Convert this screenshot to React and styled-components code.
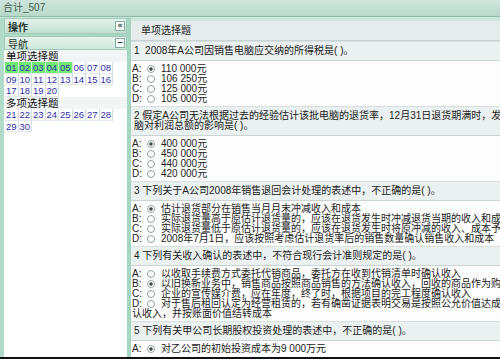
import React from "react";
import styled, { createGlobalStyle } from "styled-components";

const GlobalStyle = createGlobalStyle`
  html, body {
    margin: 0;
    padding: 0;
    background: #111;
  }
  body {
    font-family: "Liberation Sans", "Noto Sans CJK SC", sans-serif;
    overflow: hidden;
  }
`;

const single = [1, 2, 3, 4, 5, 6, 7, 8, 9, 10, 11, 12, 13, 14, 15, 16, 17, 18, 19, 20];
const multi = [21, 22, 23, 24, 25, 26, 27, 28, 29, 30];
const done = [1, 2, 3, 4, 5];

const questions = [
  {
    head: ["1\u00a0 2008年A公司因销售电脑应交纳的所得税是( )。"],
    picked: 0,
    options: [["110 000元"], ["106 250元"], ["125 000元"], ["105 000元"]],
  },
  {
    head: [
      "2 假定A公司无法根据过去的经验估计该批电脑的退货率，12月31日退货期满时，发生销售退回的电",
      "脑对利润总额的影响是( )。",
    ],
    picked: 0,
    options: [["400 000元"], ["450 000元"], ["440 000元"], ["420 000元"]],
  },
  {
    head: ["3 下列关于A公司2008年销售退回会计处理的表述中，不正确的是( )。"],
    picked: 0,
    options: [
      ["估计退货部分在销售当月月末冲减收入和成本"],
      ["实际退货量高于原估计退货量的，应该在退货发生时冲减退货当期的收入和成本"],
      ["实际退货量低于原估计退货量的，应该在退货发生时将原冲减的收入、成本予以转回"],
      ["2008年7月1日，应该按照考虑估计退货率后的销售数量确认销售收入和成本"],
    ],
  },
  {
    head: ["4 下列有关收入确认的表述中，不符合现行会计准则规定的是( )。"],
    picked: 1,
    options: [
      ["以收取手续费方式委托代销商品，委托方在收到代销清单时确认收入"],
      ["以旧换新业务中，销售商品按照商品销售的方法确认收入，回收的商品作为购进商品处理"],
      ["企业的宣传媒介费，应在年度，终了时，根据项目的完工程度确认收入"],
      [
        "对于售后租回认定为经营租赁的，若有确凿证据表明交易是按照公允价值达成的，应当确",
        "认收入，并按账面价值结转成本",
      ],
    ],
  },
  {
    head: ["5 下列有关甲公司长期股权投资处理的表述中，不正确的是( )。"],
    picked: 0,
    options: [["对乙公司的初始投资成本为9 000万元"]],
  },
];

const letters = ["A", "B", "C", "D"];

const pad = (n) => (n < 10 ? "0" + n : String(n));

export default function App() {
  return (
    <>
      <GlobalStyle />
      <Window>
        <TitleBar>合计_507</TitleBar>
        <Body>
          <Side>
            <SideHead>
              <span>操作</span>
              <HeadBtn>«</HeadBtn>
            </SideHead>
            <SideHead $sub>
              <span>导航</span>
              <HeadBtn>−</HeadBtn>
            </SideHead>
            <Nav>
              <GroupLabel>单项选择题</GroupLabel>
              <Grid>
                {single.map((n) => (
                  <Cell key={n} $on={done.includes(n)}>
                    {pad(n)}
                  </Cell>
                ))}
              </Grid>
              <GroupLabel>多项选择题</GroupLabel>
              <Grid>
                {multi.map((n) => (
                  <Cell key={n}>{n}</Cell>
                ))}
              </Grid>
            </Nav>
          </Side>
          <Main>
            <MainHead>单项选择题</MainHead>
            {questions.map((q, qi) => (
              <div key={qi}>
                <QHead>
                  {q.head.map((line, i) => (
                    <div key={i}>{line}</div>
                  ))}
                </QHead>
                <Options>
                  {q.options.map((opt, oi) => (
                    <React.Fragment key={oi}>
                      <Opt>
                        <Letter>{letters[oi]}:</Letter>
                        <Radio $on={q.picked === oi} />
                        <span>{opt[0]}</span>
                      </Opt>
                      {opt.slice(1).map((more, mi) => (
                        <Opt key={mi}>{more}</Opt>
                      ))}
                    </React.Fragment>
                  ))}
                </Options>
              </div>
            ))}
          </Main>
        </Body>
        <BottomEdge />
      </Window>
    </>
  );
}

const Window = styled.div`
  width: 500px;
  height: 359px;
  display: flex;
  flex-direction: column;
  overflow: hidden;
  background: #cde6db;
`;

const TitleBar = styled.div`
  height: 16px;
  flex: none;
  padding-left: 3px;
  line-height: 16px;
  font-size: 10px;
  color: #3d5a4e;
  background: linear-gradient(#cfe6dc, #b9d8ca);
  border-bottom: 1px solid #8fbcab;
`;

const Body = styled.div`
  flex: 1;
  min-height: 0;
  display: flex;
  padding-top: 1px;
  background: #cde6db;
`;

const Side = styled.div`
  width: 123px;
  flex: none;
  display: flex;
  flex-direction: column;
  padding: 0 4px 0 4px;
  background: linear-gradient(to right, #b0dcc9, #a5d6c1);
`;

const SideHead = styled.div`
  height: ${(p) => (p.$sub ? "12px" : "14px")};
  margin-top: ${(p) => (p.$sub ? "2px" : "0")};
  display: flex;
  align-items: center;
  justify-content: space-between;
  padding: 0 1px 0 3px;
  font-size: 10px;
  font-weight: ${(p) => (p.$sub ? "normal" : "bold")};
  color: #23372e;
  background: ${(p) =>
    p.$sub
      ? "linear-gradient(#e6f3ed, #cfe6dc)"
      : "linear-gradient(#e2f1ea, #c3dfd2)"};
  border: 1px solid #a2cbb9;
`;

const HeadBtn = styled.span`
  width: 8px;
  height: 8px;
  display: flex;
  align-items: center;
  justify-content: center;
  border: 1px solid #86ad9f;
  background: #f6fbf8;
  font-family: "DejaVu Sans", sans-serif;
  font-size: 8px;
  line-height: 1;
  color: #2f4a40;
  font-weight: bold;
`;

const Nav = styled.div`
  flex: 1;
  background: #fff;
  padding-left: 1px;
`;

const GroupLabel = styled.div`
  height: 12px;
  line-height: 12px;
  font-size: 10.5px;
  color: #111;
  background: #f1f5f5;
  padding-left: 1px;
`;

const Grid = styled.div`
  display: grid;
  grid-template-columns: repeat(8, 13.5px);
  grid-auto-rows: 11.7px;
`;

const Cell = styled.div`
  font-size: 9.5px;
  line-height: 11px;
  text-align: center;
  color: #3030aa;
  background: ${(p) => (p.$on ? "#72ea72" : "transparent")};
  border-right: 1px solid #d3dde8;
  border-bottom: 1px solid #e3e9ef;
`;

const Main = styled.div`
  flex: 1;
  min-width: 0;
  margin-top: 3px;
  background: #fdfdfd;
  overflow: hidden;
`;

const MainHead = styled.div`
  height: 19px;
  padding-left: 10px;
  line-height: 19px;
  font-size: 10px;
  color: #222;
  background: #e6ecec;
  border-bottom: 1px solid #c9d2d2;
`;

const QHead = styled.div`
  padding: 4px 3px;
  font-size: 10px;
  line-height: 10px;
  white-space: nowrap;
  color: #222;
  background: #ebf0f0;
  border-top: 1px solid #d8dfdf;
  border-bottom: 1px solid #cbd4d4;
`;

const Options = styled.div`
  padding: 3px 0 2px 1px;
`;

const Opt = styled.div`
  height: 10px;
  display: flex;
  align-items: center;
  font-size: 10px;
  line-height: 10px;
  white-space: nowrap;
  color: #222;
`;

const Letter = styled.span`
  width: 15px;
  flex: none;
`;

const Radio = styled.span`
  width: 6px;
  height: 6px;
  flex: none;
  margin-right: 6px;
  border: 1px solid #96a3a3;
  border-radius: 50%;
  background: ${(p) =>
    p.$on
      ? "radial-gradient(circle, #3f4a4a 0 1.4px, #fff 1.9px)"
      : "#fff"};
`;

const BottomEdge = styled.div`
  height: 2px;
  flex: none;
  background: #111;
`;
